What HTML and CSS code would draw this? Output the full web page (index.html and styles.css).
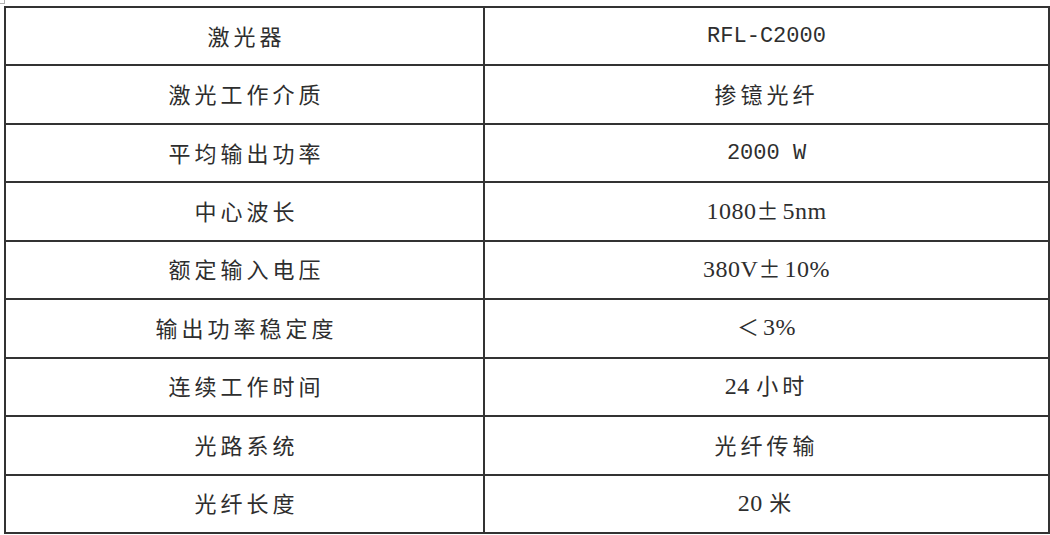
FILE: index.html
```html
<!DOCTYPE html>
<html lang="zh-CN">
<head>
<meta charset="utf-8">
<title>激光器参数</title>
<link rel="stylesheet" href="styles.css">
</head>
<body>
<span class="corner-mark"></span>
<table class="spec">
  <colgroup><col class="c-name"><col class="c-value"></colgroup>
  <tbody>
    <tr><td>激光器</td><td><span class="mono">RFL-C2000</span></td></tr>
    <tr><td>激光工作介质</td><td>掺镱光纤</td></tr>
    <tr><td>平均输出功率</td><td><span class="mono">2000 W</span></td></tr>
    <tr><td>中心波长</td><td><span class="serif">1080</span>±<span class="serif">5nm</span></td></tr>
    <tr><td>额定输入电压</td><td><span class="serif">380V</span>±<span class="serif">10%</span></td></tr>
    <tr><td>输出功率稳定度</td><td>＜<span class="serif">3%</span></td></tr>
    <tr><td>连续工作时间</td><td><span class="serif">24 </span>小时</td></tr>
    <tr><td>光路系统</td><td>光纤传输</td></tr>
    <tr><td>光纤长度</td><td><span class="serif">20 </span>米</td></tr>
  </tbody>
</table>
</body>
</html>
```
FILE: styles.css
```css
html, body {
  margin: 0;
  padding: 0;
  background: #ffffff;
}

body {
  position: relative;
  width: 1050px;
  height: 535px;
  overflow: hidden;
  font-family: "Noto Sans CJK SC", "Noto Sans", sans-serif;
  color: #2e2e2e;
}

.corner-mark {
  position: absolute;
  left: 0;
  top: 0;
  width: 4px;
  height: 3px;
  border-right: 1px solid #b0b0b0;
  border-bottom: 1px solid #b0b0b0;
}

.spec {
  margin: 6px 0 0 4px;
  width: 1044px;
  height: 528px;
  border-collapse: collapse;
  table-layout: fixed;
}

.c-name { width: 479px; }
.c-value { width: 565px; }

.spec td {
  border: 2px solid #333333;
  padding: 0 0 3px 0;
  text-align: center;
  vertical-align: middle;
  font-size: 22px;
  letter-spacing: 4px;
  line-height: 1;
  height: 53px;
}

.spec td:first-child {
  text-indent: 4px;
}

.mono {
  font-family: "Liberation Mono", monospace;
  letter-spacing: 0;
  font-size: 22px;
}

.serif {
  font-family: "Liberation Serif", serif;
  letter-spacing: 0.5px;
  font-size: 24px;
}
```
